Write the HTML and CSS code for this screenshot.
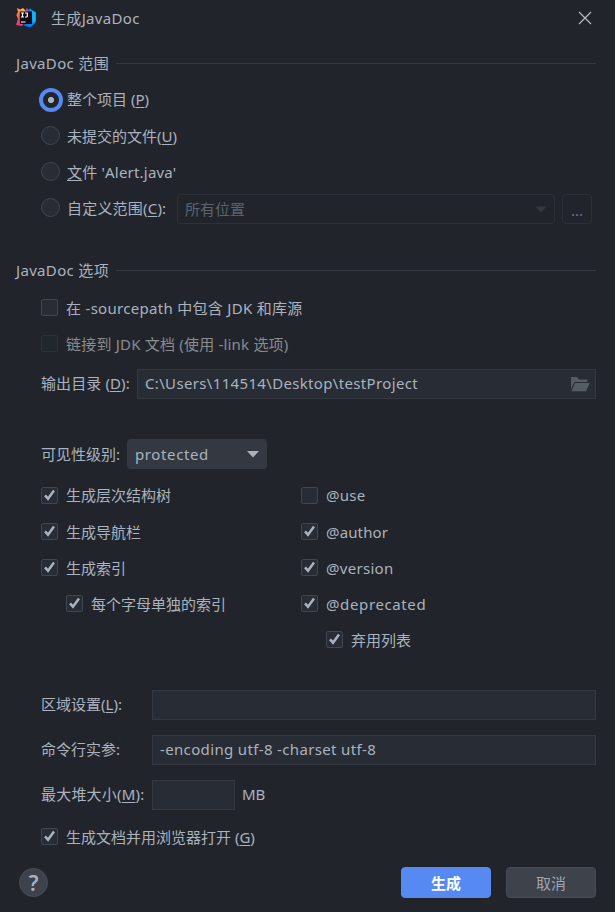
FILE: index.html
```html
<!DOCTYPE html>
<html lang="zh-CN">
<head>
<meta charset="utf-8">
<title>生成JavaDoc</title>
<link rel="stylesheet" href="styles.css">
</head>
<body>
<svg class="defs" width="0" height="0" aria-hidden="true">
  <symbol id="check" viewBox="0 0 18 18"><path d="M4 9.300L7 12.700L13 4.400" fill="none" stroke="#abb2bf" stroke-width="2.500"/></symbol>
</svg>
<main class="dialog">
  <header class="titlebar">
    <svg class="logo" width="20" height="20" viewBox="0 0 20 20">
      <defs><linearGradient id="warm" x1="0.2" y1="0" x2="0" y2="1"><stop offset="0" stop-color="#fdb03d"/><stop offset="0.5" stop-color="#f4603f"/><stop offset="1" stop-color="#e0359a"/></linearGradient></defs>
      <path d="M1 0L4 1.500L7 0L10 3L12 8L8 15L6 18L0 17L2 11L.3 7L2 4Z" fill="url(#warm)"/>
      <path d="M9 3L11 0L13 3L12 8Z" fill="#d63ba8"/>
      <path d="M11 3L14 .6L19.700 4V15L14 19.500L7 17L15 14Z" fill="#087cfa"/>
      <path d="M13 1.500L19.700 4.500V13L16.500 15L16 4Z" fill="#14b5f5"/>
      <path d="M3.800 3.500H16V16H3.800Z" fill="#120a10"/>
      <path d="M5 5H8M6.500 5V9M5 9H8M9 5H11.300V8.200Q11.300 9 10.500 9H9M5 14H9.500" fill="none" stroke="#fff" stroke-width="1.200"/>
    </svg>
    <h1 class="title">生成JavaDoc</h1>
    <svg class="close" width="14" height="14" viewBox="0 0 14 14"><path d="M1 1L13 13M13 1L1 13" stroke="#b9bbbf" stroke-width="1.200"/></svg>
  </header>

  <h2 class="section"><span>JavaDoc 范围</span></h2>
  <div class="group scopes">
    <label class="row first"><i class="radio on"></i><span>整个项目 (<u>P</u>)</span></label>
    <label class="row"><i class="radio"></i><span>未提交的文件(<u>U</u>)</span></label>
    <label class="row"><i class="radio"></i><span class="alert"><u>文</u>件 'Alert.java'</span></label>
    <div class="row"><i class="radio"></i><span class="custom">自定义范围(<u>C</u>):</span>
      <div class="select off"><span>所有位置</span><svg width="12" height="7" viewBox="0 0 12 7"><path d="M.5 .5H11.500L6 6.500Z" fill="#333841"/></svg></div>
      <div class="more">...</div>
    </div>
  </div>

  <h2 class="section options"><span>JavaDoc 选项</span></h2>
  <div class="group sources">
    <label class="row"><i class="box"></i><span class="src">在 -sourcepath 中包含 JDK 和库源</span></label>
    <label class="row dim"><i class="box"></i><span class="link">链接到 JDK 文档 (使用 -link 选项)</span></label>
  </div>
  <div class="field output"><span class="label">输出目录 (<u>D</u>):</span>
    <div class="input"><span class="path">C:\Users\114514\Desktop\testProject</span>
      <svg width="20" height="15" viewBox="0 0 20 15"><path d="M1 0H7L9 2.500H17.500V5H4.500L1 12Z" fill="#565c65"/><path d="M5 6H19.800L16 14.300H1.500Z" fill="#565c65"/></svg>
    </div>
  </div>

  <div class="field visibility"><span class="label">可见性级别:</span>
    <div class="select level"><span class="prot">protected</span><svg width="12" height="7" viewBox="0 0 12 7"><path d="M0 0H12L6 6.500Z" fill="#abb2bf"/></svg></div>
  </div>
  <div class="columns">
    <div class="col">
      <label class="row first"><i class="box"><svg><use href="#check"/></svg></i><span>生成层次结构树</span></label>
      <label class="row"><i class="box"><svg><use href="#check"/></svg></i><span>生成导航栏</span></label>
      <label class="row"><i class="box"><svg><use href="#check"/></svg></i><span>生成索引</span></label>
      <label class="row sub"><i class="box"><svg><use href="#check"/></svg></i><span>每个字母单独的索引</span></label>
    </div>
    <div class="col tags">
      <label class="row first"><i class="box"></i><span>@use</span></label>
      <label class="row"><i class="box"><svg><use href="#check"/></svg></i><span class="author">@author</span></label>
      <label class="row"><i class="box"><svg><use href="#check"/></svg></i><span>@version</span></label>
      <label class="row"><i class="box"><svg><use href="#check"/></svg></i><span class="prot">@deprecated</span></label>
      <label class="row sub"><i class="box"><svg><use href="#check"/></svg></i><span class="plain">弃用列表</span></label>
    </div>
  </div>

  <div class="form">
    <span class="label">区域设置(<u>L</u>):</span><div class="input"></div>
    <span class="label">命令行实参:</span><div class="input"><span class="args">-encoding utf-8 -charset utf-8</span></div>
    <span class="label heap-label">最大堆大小(<u>M</u>):</span><div class="heap"><div class="input"></div><span class="unit">MB</span></div>
  </div>
  <label class="row browser"><i class="box"><svg><use href="#check"/></svg></i><span>生成文档并用浏览器打开 (<u>G</u>)</span></label>

  <footer class="footer">
    <div class="help">?</div>
    <div class="button primary">生成</div>
    <div class="button">取消</div>
  </footer>
</main>
</body>
</html>
```

FILE: styles.css
```css
* { box-sizing: border-box; }
body {
  margin: 0;
  background: #21252b;
  color: #abb2bf;
  font: 15px/20px "Noto Sans", "Noto Sans CJK SC", sans-serif;
  white-space: nowrap;
}
.defs { display: block; }
.dialog {
  height: 912px;
  padding: 0 19px 0 16px;
  overflow: hidden;
  display: flex;
  flex-direction: column;
}
h1, h2 { margin: 0; font-size: 15px; font-weight: 400; letter-spacing: 0.33px; }
u { text-underline-offset: 2px; text-decoration-thickness: 1px; }

.titlebar { height: 36px; display: flex; align-items: center; }
.title { margin-left: 15px; flex: 1; }
.close { margin-right: 4px; }

.section { display: flex; align-items: center; gap: 7px; height: 20px; margin-top: 17px; }
.section::after { content: ""; flex: 1; height: 1px; background: #333841; }
.section.options { margin-top: 35px; }

.row { display: flex; align-items: center; height: 36px; }
.row > span { position: relative; top: 1px; }
.row.first > span { top: 0; }
.scopes { margin: 8px 0 0 25px; }
.radio {
  width: 19px; height: 19px; margin: 1px 7px 0 0; flex: none;
  border: 1px solid #3f4551; border-radius: 50%; background: #282c34;
}
.radio.on {
  width: 24px; height: 24px; margin: 1px 4px 0 -2px;
  border: 4px solid #568af2;
  background: radial-gradient(circle, #abb2bf 0 2.7px, #21252b 3.5px);
}
.alert { letter-spacing: 0.2px; }
.custom { width: 110px; letter-spacing: 0.2px; }
.select {
  height: 30px; padding: 0 8px; border-radius: 4px;
  display: flex; align-items: center; justify-content: space-between;
}
.select.off { width: 378px; border: 1px solid #2c3038; color: #5c6370; padding: 0 7px; }
.select.off, .more { position: relative; top: 2px; }
.more {
  width: 30px; height: 30px; margin-left: 7px;
  border: 1px solid #2c3038; border-radius: 4px;
  color: #6c737f; text-align: center; line-height: 30px;
}

.box {
  width: 17px; height: 17px; margin: 0 8px 0 1px; flex: none;
  border: 1px solid #3f4551; border-radius: 2px; background: #282c34;
}
.box svg { display: block; width: 18px; height: 18px; margin: -1.5px; }
.sources { margin: 9px 0 0 24px; }
.src { letter-spacing: 0.3px; }
.link { letter-spacing: 0.2px; }
.path { letter-spacing: 0.34px; }
.args { letter-spacing: 0.35px; }
.dim { color: #8a8c8e; }
.dim .box { background: #22262d; border-color: #2c3038; }

.field { display: flex; align-items: center; margin-left: 25px; }
.input {
  height: 30px; padding: 0 7px 1px; border: 1px solid #333841; background: #282c34;
  display: flex; align-items: center; justify-content: space-between;
}
.output { margin-top: 8px; }
.output .label { width: 96px; letter-spacing: 0.1px; padding-bottom: 2px; }
.output .input { flex: 1; padding: 0 5px 0 7px; }
.path { padding-bottom: 2px; }
.visibility { margin-top: 40px; }
.visibility .label { width: 86px; }
.level { width: 140px; background: #333841; }

.columns { display: flex; margin: 8px 0 0 24px; height: 182px; }
.col { width: 260px; }
.tags { letter-spacing: 0.3px; }
.tags .author { letter-spacing: 0.15px; }
.tags .plain { letter-spacing: 0; }
.prot, .tags .prot { letter-spacing: 0.62px; }
.sub { margin-left: 25px; }

.form {
  display: grid; grid-template-columns: 111px 1fr; grid-auto-rows: 30px; row-gap: 15px;
  align-items: center; margin: 31px 0 0 25px;
}
.form .label, .unit, .args { padding-bottom: 2px; }
.heap-label { letter-spacing: 0.2px; }
.heap { display: flex; align-items: center; gap: 7px; }
.heap .input { width: 83px; }
.browser { margin: 8px 0 0 24px; }

.footer { display: flex; align-items: center; margin-top: 13px; height: 31px; }
.help {
  width: 29px; height: 29px; margin: 0 auto 0 3px; border-radius: 50%;
  background: #3d424b; border: 1px solid #484d57;
  font-size: 21px; font-weight: 600; line-height: 28px; text-align: center;
}
.button {
  width: 90px; height: 31px; margin-left: 15px; border-radius: 4px;
  background: #3d424b; border: 1px solid #464b55; color: #9da5b4;
  line-height: 31px; text-align: center;
}
.primary { background: #568af2; border-color: #568af2; color: #fff; font-weight: 700; }
```
